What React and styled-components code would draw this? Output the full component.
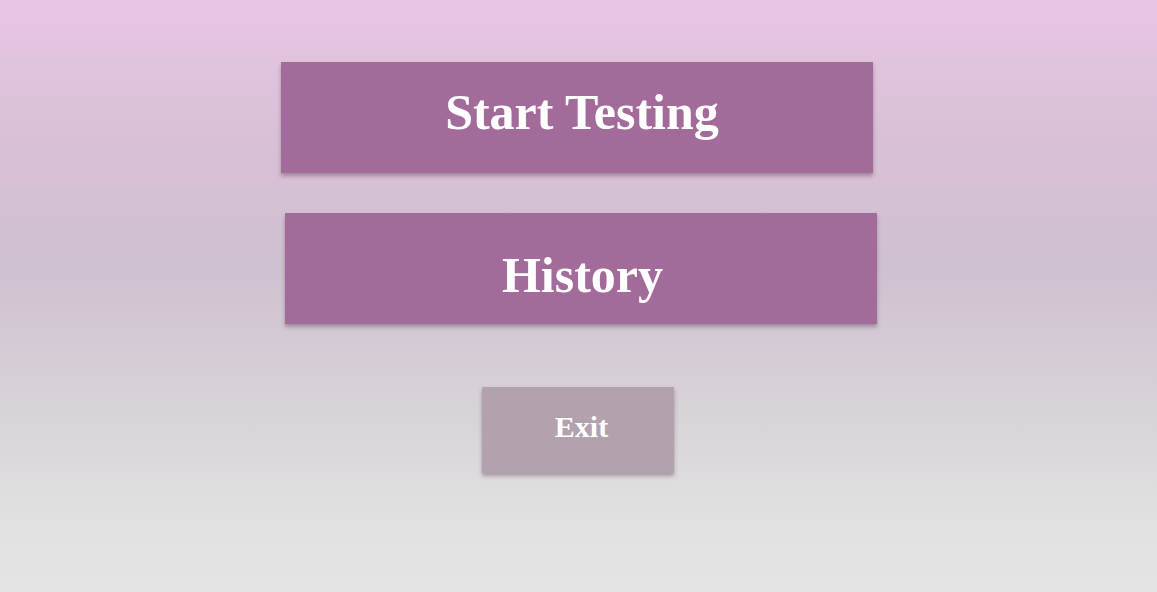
import React from "react";
import styled, { createGlobalStyle } from "styled-components";

const GlobalStyle = createGlobalStyle`
  html, body {
    margin: 0;
    padding: 0;
    height: 100%;
  }
  body {
    font-family: "Liberation Serif", "DejaVu Serif", serif;
  }
`;

const Screen = styled.div`
  width: 100%;
  min-height: 592px;
  background: linear-gradient(
    to bottom,
    #e8c5e4 0%,
    #d8c0d6 25%,
    #cfc1d0 45%,
    #d8d3d9 70%,
    #e1e1e1 88%,
    #e4e4e4 100%
  );
  display: flex;
  flex-direction: column;
  align-items: center;
  padding-top: 62px;
  box-sizing: border-box;
`;

const MenuButton = styled.button`
  width: ${(p) => p.$w}px;
  height: ${(p) => p.$h}px;
  margin: 0 0 ${(p) => p.$gap}px ${(p) => p.$shift * 2}px;
  padding: ${(p) => p.$pt || 0}px 0 ${(p) => p.$pb || 0}px ${(p) => p.$pl || 0}px;
  border: none;
  background: ${(p) => (p.$muted ? "#b3a1ad" : "#a36b99")};
  color: #ffffff;
  font-family: "Liberation Serif", "DejaVu Serif", serif;
  font-weight: 700;
  font-size: ${(p) => p.$fs}px;
  box-shadow: 0 3px 4px rgba(60, 30, 55, 0.35);
  cursor: pointer;
  display: flex;
  align-items: center;
  justify-content: center;
  box-sizing: border-box;
`;

const App = () => {
  return (
    <>
      <GlobalStyle />
      <Screen>
        <MenuButton $w={592} $h={111} $gap={40} $shift={-1.5} $pb={12} $pl={10} $fs={50}>
          Start Testing
        </MenuButton>
        <MenuButton $w={592} $h={111} $gap={63} $shift={2.5} $pt={12} $pl={3} $fs={50}>
          History
        </MenuButton>
        <MenuButton $w={192} $h={86} $gap={0} $shift={-0.5} $pb={6} $pl={7} $fs={30} $muted>
          Exit
        </MenuButton>
      </Screen>
    </>
  );
};

export default App;
